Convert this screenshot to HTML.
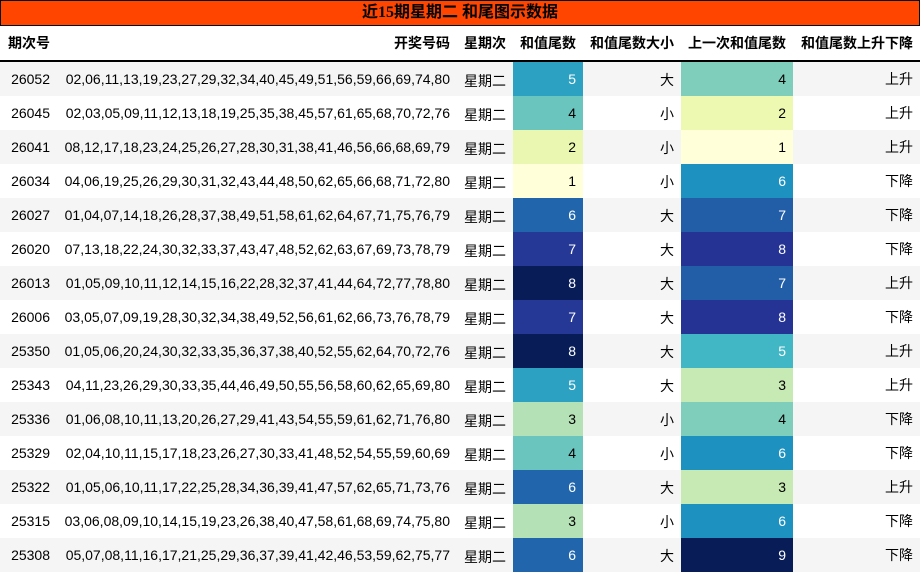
<!DOCTYPE html><html><head><meta charset="utf-8"><style>
body{margin:0;width:920px;height:573px;overflow:hidden;background:#fff;font-family:"Liberation Sans","Noto Sans CJK SC",sans-serif;font-size:14px;color:#000}
.t{position:absolute;left:0;top:0;width:918px;height:24px;background:#FF4500;border:1px solid #000;text-align:center;font:bold 16px/24px "Liberation Serif","Noto Sans CJK SC",sans-serif}
table{position:absolute;left:0;top:26px;border-collapse:collapse;width:920px}
th{height:34px;font-weight:bold;text-align:right;padding:0 7px;border-bottom:2px solid #000;font-size:14px}
td{height:34px;padding:0 7px;text-align:right;white-space:nowrap}
tr:nth-child(odd) td{background:#f5f5f5}
tr:nth-child(even) td{background:#fff}
td.w{padding-top:4px;height:30px}
td.v{padding-top:1px;height:33px}
</style></head><body>
<div class="t">近15期星期二 和尾图示数据</div>
<table>
<colgroup><col style="width:57px"><col style="width:400px"><col style="width:56px"><col style="width:70px"><col style="width:98px"><col style="width:112px"><col style="width:127px"></colgroup>
<thead><tr><th style="text-align:left;padding-left:8px">期次号</th><th>开奖号码</th><th>星期次</th><th>和值尾数</th><th>和值尾数大小</th><th>上一次和值尾数</th><th>和值尾数上升下降</th></tr></thead>
<tbody id="b"></tbody></table>
<script>
var d=[["26052","02,06,11,13,19,23,27,29,32,34,40,45,49,51,56,59,66,69,74,80",5,"大",4,"上升"],
["26045","02,03,05,09,11,12,13,18,19,25,35,38,45,57,61,65,68,70,72,76",4,"小",2,"上升"],
["26041","08,12,17,18,23,24,25,26,27,28,30,31,38,41,46,56,66,68,69,79",2,"小",1,"上升"],
["26034","04,06,19,25,26,29,30,31,32,43,44,48,50,62,65,66,68,71,72,80",1,"小",6,"下降"],
["26027","01,04,07,14,18,26,28,37,38,49,51,58,61,62,64,67,71,75,76,79",6,"大",7,"下降"],
["26020","07,13,18,22,24,30,32,33,37,43,47,48,52,62,63,67,69,73,78,79",7,"大",8,"下降"],
["26013","01,05,09,10,11,12,14,15,16,22,28,32,37,41,44,64,72,77,78,80",8,"大",7,"上升"],
["26006","03,05,07,09,19,28,30,32,34,38,49,52,56,61,62,66,73,76,78,79",7,"大",8,"下降"],
["25350","01,05,06,20,24,30,32,33,35,36,37,38,40,52,55,62,64,70,72,76",8,"大",5,"上升"],
["25343","04,11,23,26,29,30,33,35,44,46,49,50,55,56,58,60,62,65,69,80",5,"大",3,"上升"],
["25336","01,06,08,10,11,13,20,26,27,29,41,43,54,55,59,61,62,71,76,80",3,"小",4,"下降"],
["25329","02,04,10,11,15,17,18,23,26,27,30,33,41,48,52,54,55,59,60,69",4,"小",6,"下降"],
["25322","01,05,06,10,11,17,22,25,28,34,36,39,41,47,57,62,65,71,73,76",6,"大",3,"上升"],
["25315","03,06,08,09,10,14,15,19,23,26,38,40,47,58,61,68,69,74,75,80",3,"小",6,"下降"],
["25308","05,07,08,11,16,17,21,25,29,36,37,39,41,42,46,53,59,62,75,77",6,"大",9,"下降"]];
var a={1:"#FFFFD9",2:"#EAF7B1",3:"#B5E1B6",4:"#6AC5BF",5:"#2CA1C2",6:"#2166AC",7:"#253895",8:"#081D58"};
var b={1:"#FFFFDA",2:"#EDF8B1",3:"#C7E9B4",4:"#7FCDBB",5:"#41B6C4",6:"#1D91C0",7:"#225EA8",8:"#253494",9:"#081D58"};
var h="";d.forEach(function(r){
h+="<tr><td>"+r[0]+"</td><td>"+r[1]+"</td><td class='w'>星期二</td><td style='background:"+a[r[2]]+";color:"+(r[2]>=5?"#fff":"#000")+"'>"+r[2]+"</td><td class='v'>"+r[3]+"</td><td style='background:"+b[r[4]]+";color:"+(r[4]>=5?"#fff":"#000")+"'>"+r[4]+"</td><td>"+r[5]+"</td></tr>";});
document.getElementById("b").innerHTML=h;
</script>
</body></html>
